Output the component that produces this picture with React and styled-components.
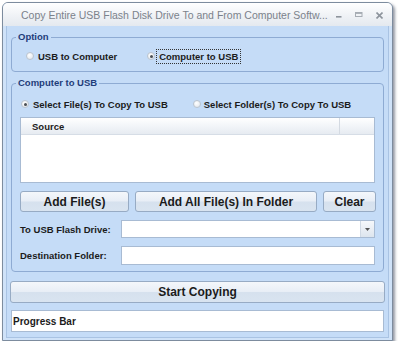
import React from "react";
import styled, { createGlobalStyle } from "styled-components";

const Global = createGlobalStyle`
  html, body { margin: 0; padding: 0; background: #ffffff; }
  body { font-family: "Liberation Sans", Arial, sans-serif; }
  * { box-sizing: border-box; }
`;

const Window = styled.div`
  margin: 2px 0 0 2px;
  width: 391px;
  height: 339px;
  border: 1px solid #7d8c9e;
  border-radius: 6px 6px 0 0;
  background: #cfe2f8;
  box-shadow: 2px 2px 3px rgba(60, 70, 90, 0.55);
  display: flex;
  flex-direction: column;
  padding: 0 3px 2px 3px;
`;

const TitleBar = styled.div`
  height: 23px;
  margin: 0 -3px;
  border-radius: 5px 5px 0 0;
  background: linear-gradient(#ffffff, #eef1f5 60%, #e4e9ef);
  display: flex;
  align-items: center;
  padding: 1px 9px 0 18px;
  flex-shrink: 0;
`;

const Title = styled.div`
  flex: 1;
  font-size: 10.5px;
  color: #7b828b;
  white-space: nowrap;
`;

const Controls = styled.div`
  display: flex;
  align-items: center;
  gap: 13px;
  color: #8d949c;
`;

const Client = styled.div`
  flex: 1;
  border: 1px solid #a9c3e3;
  border-top: none;
  background: #c5dcf7;
  padding: 0 4px 4px 4px;
  display: flex;
  flex-direction: column;
`;

const Group = styled.div`
  position: relative;
  margin-top: ${(p) => p.$top}px;
  height: ${(p) => p.$h}px;
  border: 1px solid #8eabd3;
  border-radius: 4px;
  padding: ${(p) => p.$pad};
  display: flex;
  flex-direction: column;
`;

const Legend = styled.span`
  position: absolute;
  top: -7px;
  left: 4px;
  padding: 0 2px;
  background: #c5dcf7;
  font-size: 9.5px;
  font-weight: bold;
  color: #1f3d7a;
  line-height: 12px;
`;

const RadioRow = styled.div`
  display: flex;
  align-items: center;
  height: 14px;
`;

const RadioItem = styled.label`
  display: flex;
  align-items: center;
  margin-left: ${(p) => p.$ml}px;
  font-size: 9.5px;
  font-weight: bold;
  color: #1b1b1b;
  white-space: nowrap;
`;

const Circle = styled.span`
  width: 8px;
  height: 8px;
  border-radius: 50%;
  border: 1px solid #bcc5cf;
  background: radial-gradient(circle at 40% 35%, #ffffff, #dde3ea);
  margin-right: ${(p) => p.$gap}px;
  display: flex;
  align-items: center;
  justify-content: center;
  &::after {
    content: "";
    width: 3px;
    height: 3px;
    border-radius: 50%;
    background: ${(p) => (p.$on ? "#4a4f55" : "transparent")};
  }
`;

const FocusText = styled.span`
  outline: 1px dotted #333;
  outline-offset: 1px;
  padding: 0 1px;
`;

const ListBox = styled.div`
  margin-top: 6px;
  height: 66px;
  background: #ffffff;
  border: 1px solid #a8bbd3;
  display: flex;
  flex-direction: column;
`;

const ListHeader = styled.div`
  height: 17px;
  background: linear-gradient(#ffffff, #f1f4f8 55%, #e6ebf1);
  border-bottom: 1px solid #d6dde6;
  display: grid;
  grid-template-columns: 1fr 34px;
`;

const HeaderCell = styled.div`
  font-size: 9.5px;
  font-weight: bold;
  color: #1b1b1b;
  display: flex;
  align-items: center;
  padding-left: ${(p) => p.$pl || 0}px;
  border-right: ${(p) => (p.$divider ? "1px solid #d4dae2" : "none")};
`;

const ButtonRow = styled.div`
  margin-top: 8px;
  display: flex;
  gap: 6px;
`;

const Button = styled.button`
  width: ${(p) => p.$w}px;
  height: 21px;
  border: 1px solid #97abc4;
  border-radius: 3px;
  background: linear-gradient(#f4f7fb, #e8eef6 48%, #d6e1ee 52%, #d9e4f0);
  font-family: "Liberation Sans", Arial, sans-serif;
  font-size: 12px;
  font-weight: bold;
  color: #1b1b1b;
  padding: 0;
  flex-shrink: 0;
`;

const StartButton = styled(Button)`
  height: 22px;
  margin: 9px 0 0 -1px;
`;

const FieldRow = styled.div`
  margin-top: ${(p) => p.$top}px;
  display: flex;
  align-items: center;
`;

const Label = styled.span`
  width: 102px;
  font-size: 9.5px;
  font-weight: bold;
  color: #1b1b1b;
  white-space: nowrap;
`;

const Input = styled.div`
  width: 255px;
  height: ${(p) => p.$h}px;
  background: #ffffff;
  border: 1px solid #a8bbd3;
  display: flex;
  justify-content: flex-end;
`;

const DropButton = styled.div`
  width: 14px;
  height: 100%;
  border-left: 1px solid #d0d9e4;
  background: linear-gradient(#f6f8fb, #dde5ee);
  display: flex;
  align-items: center;
  justify-content: center;
`;

const Progress = styled.div`
  margin-top: 7px;
  height: 22px;
  background: #ffffff;
  border: 1px solid #a8bbd3;
  display: flex;
  align-items: center;
  padding-left: 1px;
  font-size: 10px;
  font-weight: bold;
  color: #1b1b1b;
`;

export default function App() {
  return (
    <>
      <Global />
      <Window>
        <TitleBar>
          <Title>Copy Entire USB Flash Disk Drive To and From Computer Softw...</Title>
          <Controls>
            <svg width="6" height="6" viewBox="0 0 6 6">
              <rect x="0" y="4" width="5.5" height="1.6" fill="#8d949c" />
            </svg>
            <svg width="8" height="6" viewBox="0 0 8 6">
              <rect x="0.5" y="0.5" width="6.5" height="4" fill="none" stroke="#a6acb3" />
              <rect x="0.5" y="0.5" width="6.5" height="1.4" fill="#a6acb3" />
            </svg>
            <svg width="7" height="7" viewBox="0 0 7 7">
              <path d="M0.5 0.5 L6.5 6.5 M6.5 0.5 L0.5 6.5" stroke="#8d949c" strokeWidth="1.6" />
            </svg>
          </Controls>
        </TitleBar>
        <Client>
          <Group $top={11} $h={35} $pad="11px 0 0 0">
            <Legend>Option</Legend>
            <RadioRow>
              <RadioItem $ml={14}>
                <Circle $gap={4} />
                USB to Computer
              </RadioItem>
              <RadioItem $ml={30}>
                <Circle $on $gap={3} />
                <FocusText>Computer to USB</FocusText>
              </RadioItem>
            </RadioRow>
          </Group>
          <Group $top={11} $h={189} $pad="13px 8px 0 8px">
            <Legend>Computer to USB</Legend>
            <RadioRow>
              <RadioItem $ml={1}>
                <Circle $on $gap={4} />
                Select File(s) To Copy To USB
              </RadioItem>
              <RadioItem $ml={25}>
                <Circle $gap={3} />
                Select Folder(s) To Copy To USB
              </RadioItem>
            </RadioRow>
            <ListBox>
              <ListHeader>
                <HeaderCell $pl={11} $divider>Source</HeaderCell>
                <HeaderCell />
              </ListHeader>
            </ListBox>
            <ButtonRow>
              <Button $w={109}>Add File(s)</Button>
              <Button $w={182}>Add All File(s) In Folder</Button>
              <Button $w={53}>Clear</Button>
            </ButtonRow>
            <FieldRow $top={8}>
              <Label>To USB Flash Drive:</Label>
              <Input $h={18}>
                <DropButton>
                  <svg width="5" height="3" viewBox="0 0 5 3">
                    <path d="M0 0 H5 L2.5 3 Z" fill="#555" />
                  </svg>
                </DropButton>
              </Input>
            </FieldRow>
            <FieldRow $top={8}>
              <Label>Destination Folder:</Label>
              <Input $h={19} />
            </FieldRow>
          </Group>
          <StartButton $w={375}>Start Copying</StartButton>
          <Progress>Progress Bar</Progress>
        </Client>
      </Window>
    </>
  );
}
